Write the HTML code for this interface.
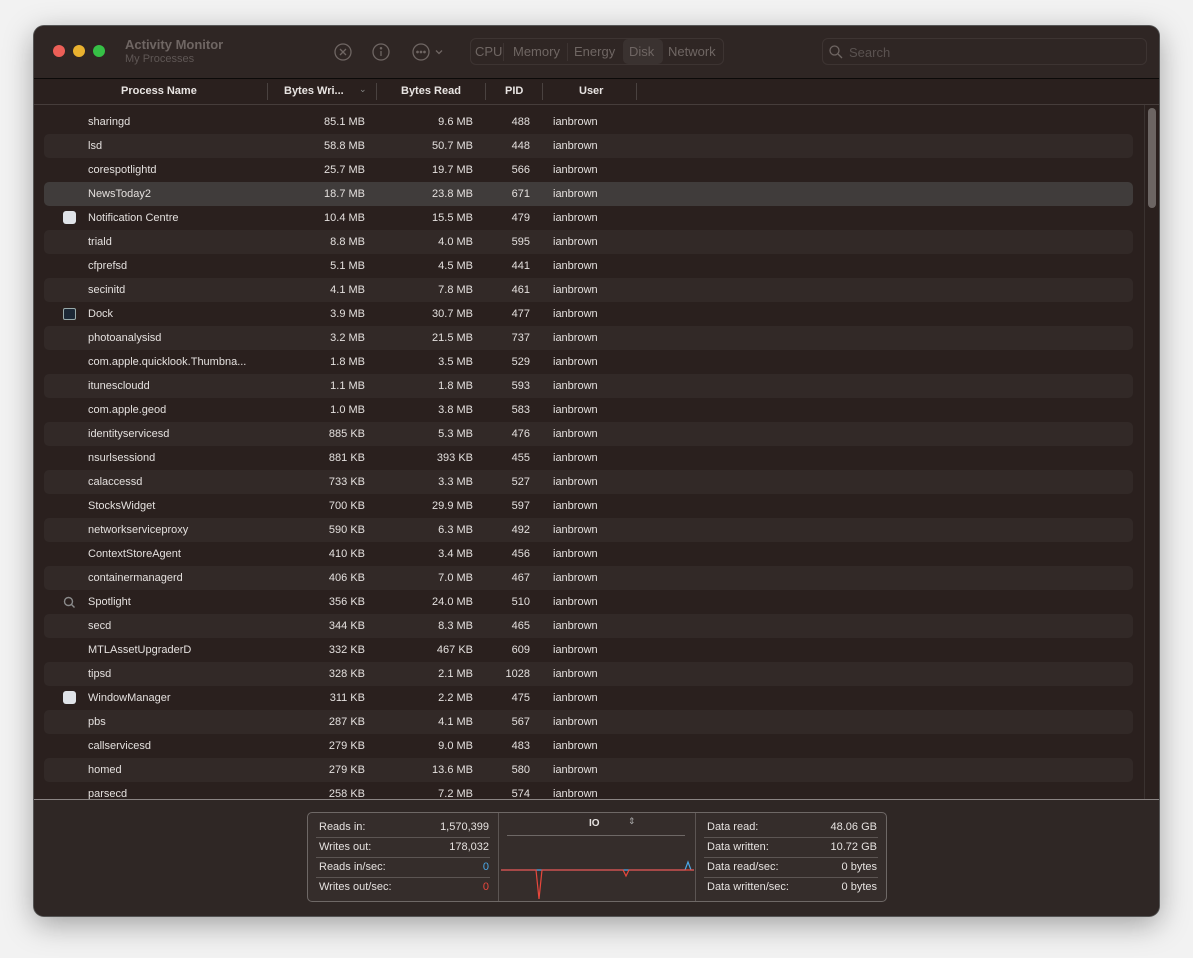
<!DOCTYPE html><html><head><style>
*{margin:0;padding:0;box-sizing:border-box}
body{width:1193px;height:958px;background:#f2f2f2;font-family:"Liberation Sans",sans-serif;position:relative;overflow:hidden}
.win{position:absolute;left:34px;top:26px;width:1125px;height:890px;background:#2a201e;border-radius:10px;box-shadow:0 0 0 1px #555,0 8px 30px rgba(0,0,0,.35);overflow:hidden}
.tb{position:absolute;left:0;top:0;width:100%;height:53px;background:#2f2624;border-bottom:1px solid #0c0a09}
.dot{position:absolute;top:19px;width:12px;height:12px;border-radius:50%}
.t{position:absolute;color:#6f6663}
.hdr{position:absolute;left:0;top:53px;width:100%;height:26px;border-bottom:1px solid #463d3b;color:#e8e4e2;font-size:11px;font-weight:bold}
.hdr span{position:absolute;top:6px}
.sep{position:absolute;top:4px;width:1px;height:17px;background:#4a4240}
.row{position:absolute;left:10px;width:1089px;height:24px;font-size:11px;color:#e4e0de;border-radius:5px}
.row.s{background:#322927}.row.sel{background:#403c3b}
.row span{position:absolute;top:6px}
.n{left:44px}.bw{right:768px}.br{right:660px}.pid{right:603px}.u{left:509px}
.bot{position:absolute;left:0;top:773px;width:100%;height:117px;background:#2f2725;border-top:1px solid #8a8483}
.box{position:absolute;left:273px;top:12px;width:580px;height:90px;border:1px solid #6e6866;border-radius:5px;background:#352d2b;font-size:11px;color:#e6e2e0}
.c{position:absolute;top:0;height:88px}
.ln{position:absolute;height:20px;left:0;right:0}
.ln b{font-weight:normal;position:absolute;left:11px;top:4px}.ln i{font-style:normal;position:absolute;right:9px;top:4px}
.hl{position:absolute;left:8px;right:8px;height:1px;background:#5c5553}
</style></head><body>
<div class="win">
<div class="tb">
<div class="dot" style="left:19px;background:#ec5f57"></div>
<div class="dot" style="left:39px;background:#e9b12f"></div>
<div class="dot" style="left:59px;background:#36c046"></div>
<div class="t" style="left:91px;top:11px;font-size:13px;font-weight:bold">Activity Monitor</div>
<div class="t" style="left:91px;top:27px;font-size:11px;color:#5f5755">My Processes</div>
<svg style="position:absolute;left:299px;top:16px" width="120" height="20" fill="none" stroke="#6f6663" stroke-width="1.3">
<circle cx="10" cy="10" r="8"/><path d="M7 7l6 6M13 7l-6 6"/>
<circle cx="48" cy="10" r="8"/><path d="M48 9v5"/><circle cx="48" cy="6.3" r=".6" fill="#6f6663"/>
<circle cx="88" cy="10" r="8"/><circle cx="84.5" cy="10" r=".7" fill="#6f6663"/><circle cx="88" cy="10" r=".7" fill="#6f6663"/><circle cx="91.5" cy="10" r=".7" fill="#6f6663"/>
<path d="M103 8.5l3 3 3-3"/></svg>
<div style="position:absolute;left:436px;top:12px;width:254px;height:27px;border:1px solid #3d3432;border-radius:6px;font-size:13px;color:#6f6663">
<span style="position:absolute;left:4px;top:5px">CPU</span>
<span style="position:absolute;left:32px;top:4px;width:1px;height:18px;background:#3d3432"></span>
<span style="position:absolute;left:42px;top:5px">Memory</span>
<span style="position:absolute;left:96px;top:4px;width:1px;height:18px;background:#3d3432"></span>
<span style="position:absolute;left:103px;top:5px">Energy</span>
<span style="position:absolute;left:152px;top:0;width:40px;height:25px;background:#3a3230;border-radius:5px"></span>
<span style="position:absolute;left:158px;top:5px">Disk</span>
<span style="position:absolute;left:197px;top:5px">Network</span>
</div>
<div style="position:absolute;left:788px;top:12px;width:325px;height:27px;border:1px solid #3d3432;border-radius:6px">
<svg style="position:absolute;left:6px;top:6px" width="14" height="14" fill="none" stroke="#6f6663" stroke-width="1.3"><circle cx="5.5" cy="5.5" r="4.5"/><path d="M9 9l4 4"/></svg>
<span style="position:absolute;left:26px;top:6px;font-size:13px;color:#5a5250">Search</span></div>
</div>
<div class="hdr">
<span style="left:87px">Process Name</span><div class="sep" style="left:233px"></div>
<span style="left:250px">Bytes Wri...</span><span style="left:325px;top:5px;color:#888;font-weight:normal;font-size:9px">⌄</span><div class="sep" style="left:342px"></div>
<span style="left:367px">Bytes Read</span><div class="sep" style="left:451px"></div>
<span style="left:471px">PID</span><div class="sep" style="left:508px"></div>
<span style="left:545px">User</span><div class="sep" style="left:602px"></div>
</div>
<div style="position:absolute;left:1110px;top:79px;width:1px;height:694px;background:#3a3230"></div>
<div style="position:absolute;left:1114px;top:82px;width:8px;height:100px;border-radius:4px;background:#6c6563"></div>
<div id="rows"></div>
<div class="bot"><div class="box">
<div class="c" style="left:0;width:190px">
<div class="ln" style="top:4px"><b>Reads in:</b><i>1,570,399</i></div><div class="hl" style="top:24px"></div>
<div class="ln" style="top:24px"><b>Writes out:</b><i>178,032</i></div><div class="hl" style="top:44px"></div>
<div class="ln" style="top:44px"><b>Reads in/sec:</b><i style="color:#4aa8e8">0</i></div><div class="hl" style="top:64px"></div>
<div class="ln" style="top:64px"><b>Writes out/sec:</b><i style="color:#e8473c">0</i></div>
</div>
<div style="position:absolute;left:190px;top:0;width:1px;height:88px;background:#5c5553"></div>
<div class="c" style="left:191px;width:196px">
<span style="position:absolute;left:90px;top:5px;font-weight:bold;font-size:10px">IO</span>
<span style="position:absolute;left:129px;top:3px;font-size:9px;color:#aaa">⇕</span>
<div style="position:absolute;left:8px;right:10px;top:22px;height:1px;background:#6e6866"></div>
<svg style="position:absolute;left:0;top:40px" width="196" height="48" fill="none" stroke-width="1.2">
<path d="M2 17H186l3-8 3 8h3" stroke="#4aa8e8"/>
<path d="M2 17H37l3 29 3-29H124l3 6 3-6H195" stroke="#e8473c"/></svg>
</div>
<div style="position:absolute;left:387px;top:0;width:1px;height:88px;background:#5c5553"></div>
<div class="c" style="left:388px;width:190px">
<div class="ln" style="top:4px"><b>Data read:</b><i>48.06 GB</i></div><div class="hl" style="top:24px"></div>
<div class="ln" style="top:24px"><b>Data written:</b><i>10.72 GB</i></div><div class="hl" style="top:44px"></div>
<div class="ln" style="top:44px"><b>Data read/sec:</b><i>0 bytes</i></div><div class="hl" style="top:64px"></div>
<div class="ln" style="top:64px"><b>Data written/sec:</b><i>0 bytes</i></div>
</div>
</div></div>
</div>
<script>
const d=[["sharingd","85.1 MB","9.6 MB","488"],["lsd","58.8 MB","50.7 MB","448"],["corespotlightd","25.7 MB","19.7 MB","566"],["NewsToday2","18.7 MB","23.8 MB","671"],["Notification Centre","10.4 MB","15.5 MB","479","w"],["triald","8.8 MB","4.0 MB","595"],["cfprefsd","5.1 MB","4.5 MB","441"],["secinitd","4.1 MB","7.8 MB","461"],["Dock","3.9 MB","30.7 MB","477","d"],["photoanalysisd","3.2 MB","21.5 MB","737"],["com.apple.quicklook.Thumbna...","1.8 MB","3.5 MB","529"],["itunescloudd","1.1 MB","1.8 MB","593"],["com.apple.geod","1.0 MB","3.8 MB","583"],["identityservicesd","885 KB","5.3 MB","476"],["nsurlsessiond","881 KB","393 KB","455"],["calaccessd","733 KB","3.3 MB","527"],["StocksWidget","700 KB","29.9 MB","597"],["networkserviceproxy","590 KB","6.3 MB","492"],["ContextStoreAgent","410 KB","3.4 MB","456"],["containermanagerd","406 KB","7.0 MB","467"],["Spotlight","356 KB","24.0 MB","510","s"],["secd","344 KB","8.3 MB","465"],["MTLAssetUpgraderD","332 KB","467 KB","609"],["tipsd","328 KB","2.1 MB","1028"],["WindowManager","311 KB","2.2 MB","475","w"],["pbs","287 KB","4.1 MB","567"],["callservicesd","279 KB","9.0 MB","483"],["homed","279 KB","13.6 MB","580"],["parsecd","258 KB","7.2 MB","574"]];
let h="";d.forEach((r,i)=>{let cls=i==3?"row sel":(i%2?"row s":"row");let ic="";
if(r[4]=="w")ic='<div style="position:absolute;left:19px;top:5px;width:13px;height:13px;background:#dfe3e8;border-radius:3px"></div>';
if(r[4]=="d")ic='<div style="position:absolute;left:19px;top:6px;width:13px;height:12px;background:#1c2836;border:1px solid #9aa;border-radius:2px"></div>';
if(r[4]=="s")ic='<svg style="position:absolute;left:19px;top:6px" width="13" height="13" fill="none" stroke="#8a8a8a" stroke-width="1.4"><circle cx="5.5" cy="5.5" r="4"/><path d="M8.5 8.5l3 3"/></svg>';
h+=`<div class="${cls}" style="top:${84+i*24}px">${ic}<span class="n">${r[0]}</span><span class="bw">${r[1]}</span><span class="br">${r[2]}</span><span class="pid">${r[3]}</span><span class="u">ianbrown</span></div>`});
document.getElementById("rows").innerHTML='<div style="position:absolute;left:0;top:0;width:1110px;height:773px;overflow:hidden">'+h+'</div>';
</script>
</body></html>
